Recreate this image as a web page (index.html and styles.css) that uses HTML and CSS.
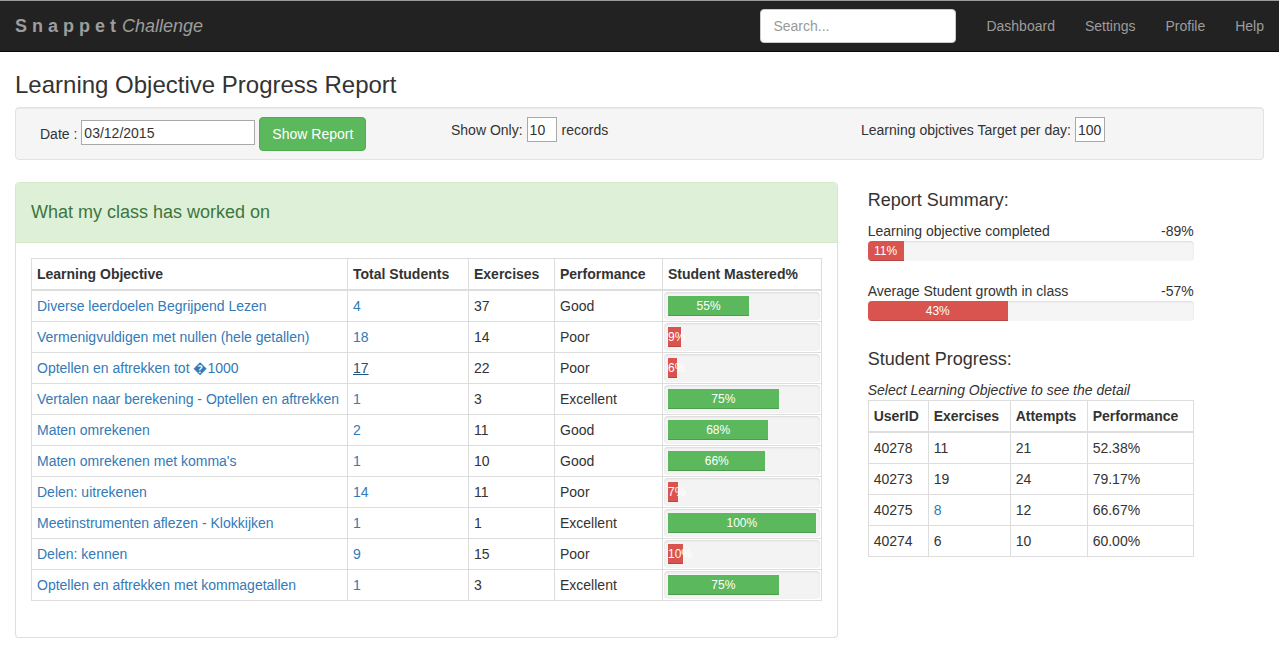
FILE: index.html
```
<!DOCTYPE html>
<html lang="nl">
<head>
<meta charset="utf-8">
<title>Learning Objective Progress Report</title>
<link rel="stylesheet" href="styles.css">
</head>
<body>
<nav class="navbar">
  <a class="brand" href="#"><b class="brand-main">Snappet</b> <i>Challenge</i></a>
  <div class="nav-spacer"></div>
  <input class="search" type="text" placeholder="Search...">
  <ul class="nav-links">
    <li><a href="#">Dashboard</a></li>
    <li><a href="#">Settings</a></li>
    <li><a href="#">Profile</a></li>
    <li><a href="#">Help</a></li>
  </ul>
</nav>

<main class="container">
  <h3 class="page-title">Learning Objective Progress Report</h3>

  <div class="well">
    <div class="well-col well-col-date">
      <label class="lbl">Date :</label>
      <input class="date-input" type="text" value="03/12/2015">
      <button class="btn-success">Show Report</button>
    </div>
    <div class="well-col">
      <span>Show Only:</span>
      <input class="small-input" type="text" value="10">
      <span class="after">records</span>
    </div>
    <div class="well-col">
      <span>Learning objctives Target per day:</span>
      <input class="small-input" type="text" value="100">
    </div>
  </div>

  <div class="row">
    <div class="col-left">
      <div class="panel">
        <div class="panel-heading">What my class has worked on</div>
        <div class="panel-body">
          <table class="tbl main-tbl">
            <thead>
              <tr>
                <th class="c-obj">Learning Objective</th>
                <th class="c-tot">Total Students</th>
                <th class="c-ex">Exercises</th>
                <th class="c-perf">Performance</th>
                <th class="c-mast">Student Mastered%</th>
              </tr>
            </thead>
            <tbody>
              <tr><td><a href="#">Diverse leerdoelen Begrijpend Lezen</a></td><td><a href="#">4</a></td><td>37</td><td>Good</td><td class="pc"><div class="progress"><div class="bar green" style="width:55%">55%</div></div></td></tr>
              <tr><td><a href="#">Vermenigvuldigen met nullen (hele getallen)</a></td><td><a href="#">18</a></td><td>14</td><td>Poor</td><td class="pc"><div class="progress"><div class="bar red" style="width:9%">9%</div></div></td></tr>
              <tr><td><a href="#">Optellen en aftrekken tot &#xFFFD;1000</a></td><td><a class="focus" href="#">17</a></td><td>22</td><td>Poor</td><td class="pc"><div class="progress"><div class="bar red" style="width:6%">6%</div></div></td></tr>
              <tr><td><a href="#">Vertalen naar berekening - Optellen en aftrekken</a></td><td><a href="#">1</a></td><td>3</td><td>Excellent</td><td class="pc"><div class="progress"><div class="bar green" style="width:75%">75%</div></div></td></tr>
              <tr><td><a href="#">Maten omrekenen</a></td><td><a href="#">2</a></td><td>11</td><td>Good</td><td class="pc"><div class="progress"><div class="bar green" style="width:68%">68%</div></div></td></tr>
              <tr><td><a href="#">Maten omrekenen met komma's</a></td><td><a href="#">1</a></td><td>10</td><td>Good</td><td class="pc"><div class="progress"><div class="bar green" style="width:66%">66%</div></div></td></tr>
              <tr><td><a href="#">Delen: uitrekenen</a></td><td><a href="#">14</a></td><td>11</td><td>Poor</td><td class="pc"><div class="progress"><div class="bar red" style="width:7%">7%</div></div></td></tr>
              <tr><td><a href="#">Meetinstrumenten aflezen - Klokkijken</a></td><td><a href="#">1</a></td><td>1</td><td>Excellent</td><td class="pc"><div class="progress"><div class="bar green" style="width:100%">100%</div></div></td></tr>
              <tr><td><a href="#">Delen: kennen</a></td><td><a href="#">9</a></td><td>15</td><td>Poor</td><td class="pc"><div class="progress"><div class="bar red" style="width:10%">10%</div></div></td></tr>
              <tr><td><a href="#">Optellen en aftrekken met kommagetallen</a></td><td><a href="#">1</a></td><td>3</td><td>Excellent</td><td class="pc"><div class="progress"><div class="bar green" style="width:75%">75%</div></div></td></tr>
            </tbody>
          </table>
        </div>
      </div>
    </div>

    <div class="col-right">
      <div class="side">
        <h4 class="side-title">Report Summary:</h4>
        <div class="stat-label"><span>Learning objective completed</span><span>-89%</span></div>
        <div class="progress big"><div class="bar red" style="width:11%">11%</div></div>
        <div class="stat-label"><span>Average Student growth in class</span><span>-57%</span></div>
        <div class="progress big"><div class="bar red" style="width:43%">43%</div></div>

        <h4 class="side-title second">Student Progress:</h4>
        <p class="hint">Select Learning Objective to see the detail</p>
        <table class="tbl side-tbl">
          <thead>
            <tr>
              <th class="s-id">UserID</th>
              <th class="s-ex">Exercises</th>
              <th class="s-at">Attempts</th>
              <th class="s-pf">Performance</th>
            </tr>
          </thead>
          <tbody>
            <tr><td>40278</td><td>11</td><td>21</td><td>52.38%</td></tr>
            <tr><td>40273</td><td>19</td><td>24</td><td>79.17%</td></tr>
            <tr><td>40275</td><td><a href="#">8</a></td><td>12</td><td>66.67%</td></tr>
            <tr><td>40274</td><td>6</td><td>10</td><td>60.00%</td></tr>
          </tbody>
        </table>
      </div>
    </div>
  </div>
</main>
</body>
</html>
```

FILE: styles.css
```
* { box-sizing: border-box; }

html, body {
  margin: 0;
  padding: 0;
}

body {
  font-family: "Liberation Sans", Arial, Helvetica, sans-serif;
  font-size: 14px;
  line-height: 20px;
  color: #333;
  background: #fff;
}

a {
  color: #337ab7;
  text-decoration: none;
}

a.focus {
  color: #23527c;
  text-decoration: underline;
}

/* ---------- navbar ---------- */
.navbar {
  display: flex;
  align-items: center;
  height: 52px;
  padding-left: 15px;
  background: #222;
  border-top: 1px solid #9a9a9a;
  border-bottom: 1px solid #080808;
}

.brand {
  color: #9d9d9d;
  font-size: 18px;
  line-height: 20px;
  white-space: nowrap;
}

.brand-main {
  letter-spacing: 5px;
  margin-right: -4px;
}

.brand i {
  font-weight: normal;
}

.nav-spacer {
  flex: 1;
}

.search {
  width: 196px;
  height: 34px;
  margin-right: 15px;
  padding: 6px 12px;
  border: 1px solid #ccc;
  border-radius: 4px;
  background: #fff;
  font-family: inherit;
  font-size: 14px;
  color: #555;
}

.search::placeholder {
  color: #999;
}

.nav-links {
  display: flex;
  list-style: none;
  margin: 0;
  padding: 0;
}

.nav-links a {
  display: block;
  padding: 15px;
  line-height: 20px;
  color: #9d9d9d;
}

/* ---------- page ---------- */
.container {
  padding: 0 15px;
}

.page-title {
  margin: 20px 0 9px;
  font-size: 24px;
  font-weight: 500;
  line-height: 26px;
  color: #333;
}

.well {
  display: grid;
  grid-template-columns: 410px 410px 1fr;
  align-items: start;
  margin-bottom: 22px;
  padding: 9px 10px 8px;
  background: #f5f5f5;
  border: 1px solid #e3e3e3;
  border-radius: 4px;
  box-shadow: inset 0 1px 1px rgba(0, 0, 0, 0.05);
}

.well-col {
  display: flex;
  align-items: center;
  padding-left: 15px;
  height: 25px;
}

.well-col-date {
  padding-left: 14px;
  height: 34px;
}

.lbl {
  margin-right: 4px;
  margin-bottom: 1px;
}

.date-input {
  width: 174px;
  height: 25px;
  margin-bottom: 3px;
  padding: 1px 2px;
  border: 1px solid #a9a9a9;
  font-family: inherit;
  font-size: 14px;
  color: #333;
  background: #fff;
}

.btn-success {
  margin-left: 4px;
  height: 34px;
  padding: 6px 12px;
  font-family: inherit;
  font-size: 14px;
  line-height: 20px;
  color: #fff;
  background: #5cb85c;
  border: 1px solid #4cae4c;
  border-radius: 4px;
}

.small-input {
  margin-left: 4px;
  width: 30px;
  height: 25px;
  padding: 1px 2px;
  border: 1px solid #a9a9a9;
  font-family: inherit;
  font-size: 14px;
  color: #333;
  background: #fff;
}

.after {
  margin-left: 5px;
}

/* ---------- main row ---------- */
.row {
  display: flex;
  margin: 0 -15px;
}

.col-left {
  width: 66.6667%;
  padding: 0 15px;
}

.col-right {
  width: 33.3333%;
  padding: 0 15px;
}

.panel {
  border: 1px solid #d6e9c6;
  border-radius: 4px;
  box-shadow: 0 1px 1px rgba(0, 0, 0, 0.05);
  background: #fff;
}

.panel-heading {
  padding: 19px 15px 20px;
  font-size: 18px;
  line-height: 20px;
  color: #3c763d;
  background: #dff0d8;
  border-bottom: 1px solid #d6e9c6;
  border-radius: 3px 3px 0 0;
}

.panel-body {
  padding: 15px 15px 16px;
}

/* ---------- tables ---------- */
.tbl {
  width: 100%;
  border-collapse: collapse;
  table-layout: fixed;
  margin-bottom: 20px;
}

.tbl th,
.tbl td {
  padding: 5px;
  line-height: 20px;
  text-align: left;
  vertical-align: top;
  border: 1px solid #ddd;
  white-space: nowrap;
}

.tbl th {
  font-weight: bold;
  border-bottom-width: 2px;
}

.c-obj { width: 316px; }
.c-tot { width: 121px; }
.c-ex { width: 86px; }
.c-perf { width: 108px; }
.c-mast { width: auto; }

.tbl td.pc {
  padding: 1px;
}

.progress {
  height: 28px;
  padding: 4px;
  background: #f3f3f3;
  border-radius: 4px;
  box-shadow: inset 0 1px 2px rgba(0, 0, 0, 0.1);
}

.bar {
  height: 20px;
  font-size: 12px;
  line-height: 20px;
  color: #fff;
  text-align: center;
  white-space: nowrap;
  box-shadow: inset 0 -1px 0 rgba(0, 0, 0, 0.15);
}

.bar.green { background: #5cb85c; }
.bar.red { background: #d9534f; }

/* ---------- side column ---------- */
.side {
  width: 326px;
}

.side-title {
  margin: 8px 0 11px;
  font-size: 18px;
  font-weight: 500;
  line-height: 20px;
}

.side-title.second {
  margin-top: 28px;
}

.stat-label {
  display: flex;
  justify-content: space-between;
}

.progress.big {
  display: flex;
  height: 20px;
  padding: 0;
  margin-bottom: 20px;
  overflow: hidden;
  background: #f5f5f5;
}

.progress.big .bar {
  flex: none;
}

.hint {
  margin: 0;
  font-style: italic;
}

.side-tbl {
  margin-bottom: 0;
}

.s-id { width: 60px; }
.s-ex { width: 82px; }
.s-at { width: 77px; }
.s-pf { width: auto; }
```
